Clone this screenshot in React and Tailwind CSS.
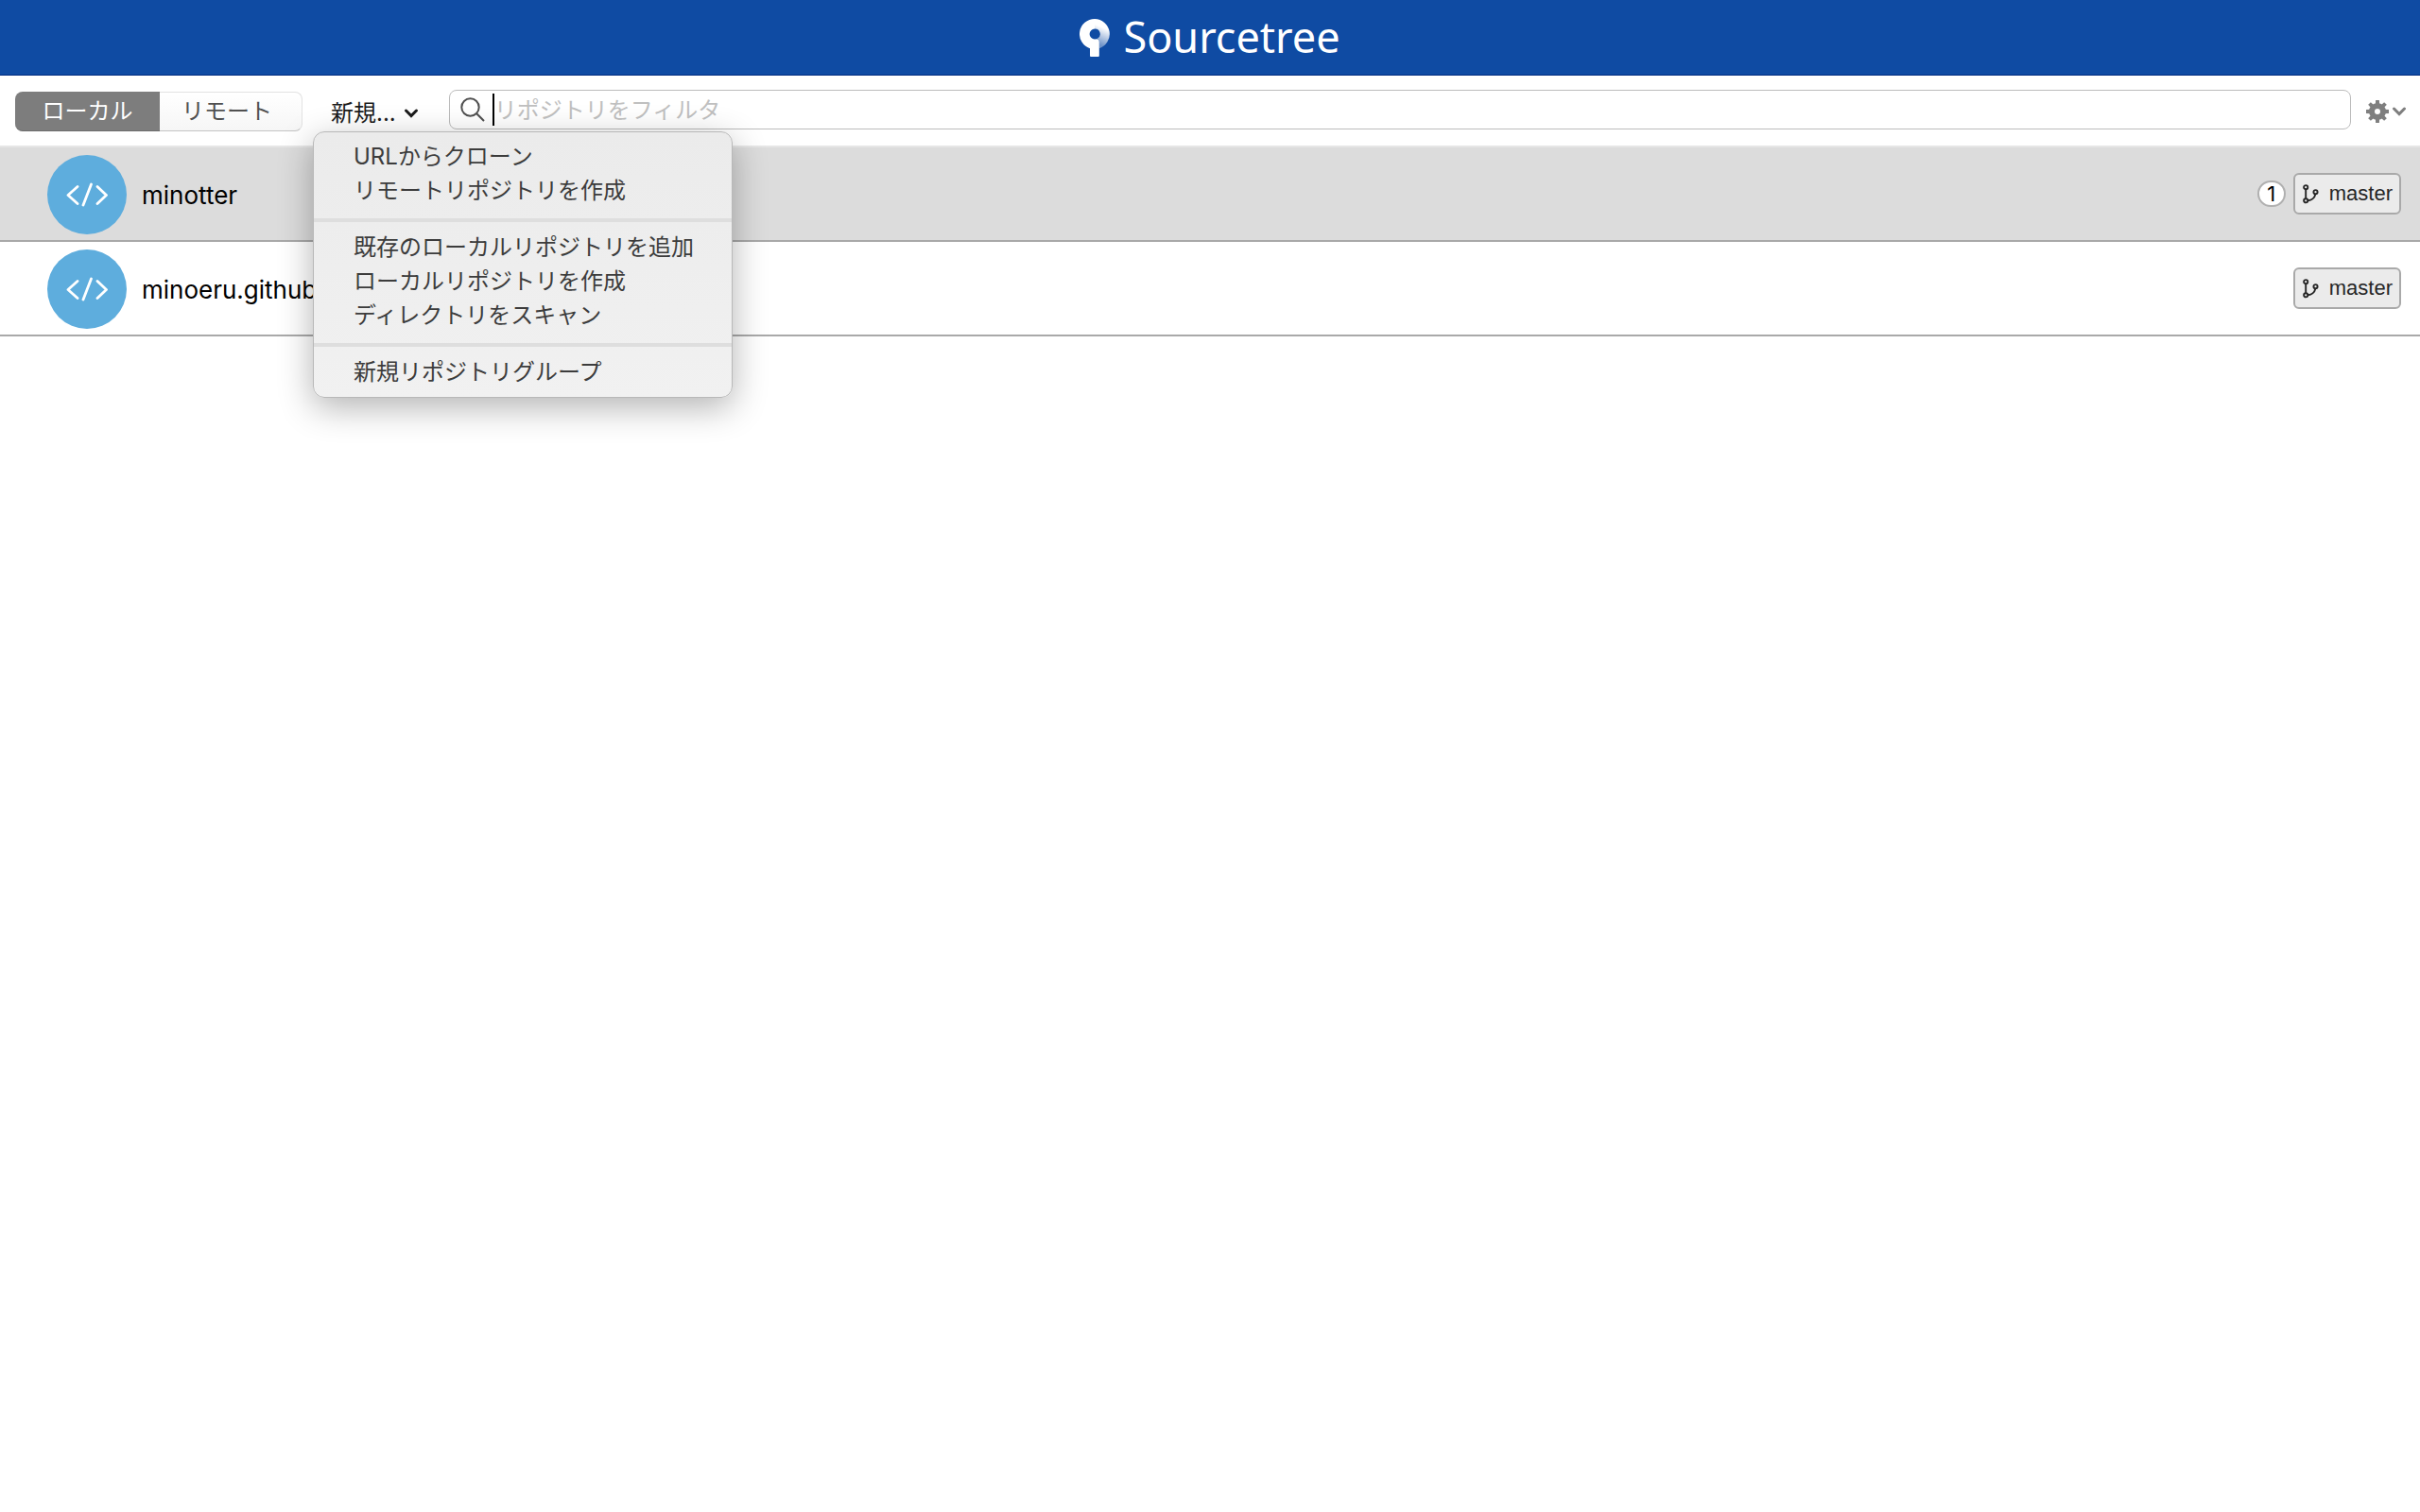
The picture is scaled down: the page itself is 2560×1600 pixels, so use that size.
const menuGroups = [
  ["URLからクローン", "リモートリポジトリを作成"],
  ["既存のローカルリポジトリを追加", "ローカルリポジトリを作成", "ディレクトリをスキャン"],
  ["新規リポジトリグループ"],
];

const repositories = [
  { name: "minotter", changes: 1, branch: "master", selected: true },
  { name: "minoeru.github", changes: 0, branch: "master", selected: false },
];

function Logo() {
  return (
    <svg width="32" height="40" viewBox="0 0 32 40" aria-hidden="true">
      <defs>
        <linearGradient id="ring-fade" gradientUnits="userSpaceOnUse" x1="27" y1="10" x2="20" y2="27">
          <stop offset="0" stopColor="#fff" />
          <stop offset="1" stopColor="#fff" stopOpacity="0.4" />
        </linearGradient>
      </defs>
      <path
        fill="url(#ring-fade)"
        d="M16 0a16 16 0 0 1 4.8 31.2V24q0-1.6-2-3.2A5.4 5.4 0 0 0 16 10.6Z"
      />
      <path
        fill="#fff"
        d="M16 0A16 16 0 0 0 11 31.2V39q0 1 1 1h7.8q1 0 1-1V24q0-1.9-1.9-2.7L16 21.4A5.4 5.4 0 0 1 16 10.6Z"
      />
    </svg>
  );
}

function Chevron({ className }) {
  return (
    <svg width="16" height="12" viewBox="0 0 16 12" className={className} aria-hidden="true">
      <path d="M2.5 3 8 8.6 13.5 3" fill="none" stroke="currentColor" strokeWidth="3" strokeLinecap="round" />
    </svg>
  );
}

function Gear() {
  return (
    <svg width="24" height="24" viewBox="-12 -12 24 24" aria-hidden="true">
      <circle r="6" fill="none" stroke="currentColor" strokeWidth="6" />
      {[0, 45, 90, 135, 180, 225, 270, 315].map((angle) => (
        <path key={angle} d="M-2.2-7 -1.9-12H1.9L2.2-7Z" fill="currentColor" transform={`rotate(${angle})`} />
      ))}
    </svg>
  );
}

function BranchIcon() {
  return (
    <svg width="17" height="21" viewBox="0 0 17 21" fill="none" stroke="currentColor" strokeWidth="1.9" aria-hidden="true">
      <circle cx="3.2" cy="3.2" r="2.1" />
      <circle cx="3.2" cy="17.3" r="2.1" />
      <circle cx="13.5" cy="8.2" r="2.1" />
      <path d="M3.2 5.5V15M13.3 10.5C12.6 14.5 9 17 5.5 17.2" />
    </svg>
  );
}

function CodeAvatar() {
  return (
    <span className="flex size-[84px] shrink-0 items-center justify-center rounded-full bg-[#5eaddd]">
      <svg width="44" height="26" viewBox="0 0 44 26" fill="none" stroke="#fff" strokeWidth="2.8" strokeLinecap="round" strokeLinejoin="round" aria-hidden="true">
        <path d="M12 4.5 2 13.5 12 22.5M26.5 2 18 24M33 4.5 42.5 13.5 33 22.5" />
      </svg>
    </span>
  );
}

function NewMenu() {
  return (
    <div className="absolute top-full -left-[19px] z-10 w-[444px] rounded-xl border border-[#b8b8b8] bg-linear-to-b from-[#ebebeb] to-[#f1f1f1] pt-2 pb-2 shadow-[0_10px_36px_rgba(0,0,0,0.3)]" role="menu">
      {menuGroups.map((group, index) => (
        <div key={group[0]} role="group">
          {index > 0 && <div className="mt-[11px] mb-[9px] h-1 bg-[#dedede]" role="separator" />}
          {group.map((label) => (
            <button key={label} type="button" role="menuitem" className="block h-9 w-full pl-[42px] text-left text-[24px] leading-9 whitespace-nowrap text-[#3c3c3c]">
              {label}
            </button>
          ))}
        </div>
      ))}
    </div>
  );
}

function Toolbar() {
  return (
    <div className="flex h-[76px] items-start border-b-2 border-[#e6e6e6] pr-[14px] pl-4">
      <div className="mt-[17px] flex h-[42px] w-[304px] text-[24px]" role="group">
        <button type="button" aria-pressed="true" className="w-[153px] rounded-l-lg border-b border-[#6e6e6e] bg-[#7d7d7d] text-white">
          ローカル
        </button>
        <button type="button" aria-pressed="false" className="flex-1 rounded-r-lg border border-l-0 border-[#e2e2e2] border-b-[#c4c4c4] bg-linear-to-b from-white to-[#f6f6f6] pr-2 text-[#505050]">
          リモート
        </button>
      </div>
      <div className="relative ml-[30px] h-[59px]">
        <button type="button" aria-haspopup="menu" aria-expanded="true" className="mt-[22px] flex h-9 items-center gap-2 text-[24px] text-[#1c1c1c]">
          <span>新規...</span>
          <Chevron />
        </button>
        <NewMenu />
      </div>
      <label className="mt-[15px] ml-8 flex h-[42px] flex-1 items-center rounded-lg border border-[#bcbcbc] bg-white pl-[11px]">
        <svg width="26" height="26" viewBox="0 0 26 26" fill="none" stroke="#505050" strokeWidth="2" aria-hidden="true">
          <circle cx="10.5" cy="10.5" r="9.2" />
          <path d="M17 17 25 25" />
        </svg>
        <span className="ml-2 h-[34px] w-0.5 bg-black" />
        <input type="text" aria-label="リポジトリをフィルタ" placeholder="リポジトリをフィルタ" className="h-10 min-w-0 flex-1 bg-transparent text-[24px] outline-none placeholder:text-[#c0c0c0]" />
      </label>
      <button type="button" aria-label="設定" className="mt-[26px] ml-4 flex h-6 items-center gap-[3px] text-[#7f7f7f]">
        <Gear />
        <Chevron />
      </button>
    </div>
  );
}

function RepositoryRow({ name, changes, branch, selected }) {
  return (
    <li className={selected ? "flex h-[100px] items-center border-b-2 border-[#a9a9a9] bg-[#dcdcdc] pr-5 pl-[50px]" : "flex h-[100px] items-center border-b-2 border-[#a9a9a9] bg-white pr-5 pl-[50px]"}>
      <div className="flex flex-1 items-center gap-4 pt-0.5">
        <CodeAvatar />
        <span className="text-[26px] text-black">{name}</span>
      </div>
      {changes > 0 && (
        <span className="mr-2 flex h-7 w-[30px] items-center justify-center rounded-full border-2 border-[#b0b0b0] bg-white text-[22px] leading-6 text-black">
          {changes}
        </span>
      )}
      <span className="flex h-11 items-center gap-[11px] rounded-md border-2 border-[#a9a9a9] bg-[#ebebeb] pr-[7px] pl-2 font-['Liberation_Sans',sans-serif] text-[22px] text-[#262626]">
        <BranchIcon />
        <span className="pb-0.5">{branch}</span>
      </span>
    </li>
  );
}

export default function App() {
  return (
    <div className="min-h-screen bg-white font-[Inter,'Noto_Sans_CJK_JP',sans-serif]">
      <header className="flex h-20 items-center justify-center gap-[14px] border-b border-[#002b80] bg-[#0f4ba3]">
        <Logo />
        <h1 className="pb-0.5 font-['Noto_Sans',sans-serif] text-[45px] leading-none text-white">Sourcetree</h1>
      </header>
      <Toolbar />
      <ul>
        {repositories.map((repository) => (
          <RepositoryRow key={repository.name} {...repository} />
        ))}
      </ul>
    </div>
  );
}
